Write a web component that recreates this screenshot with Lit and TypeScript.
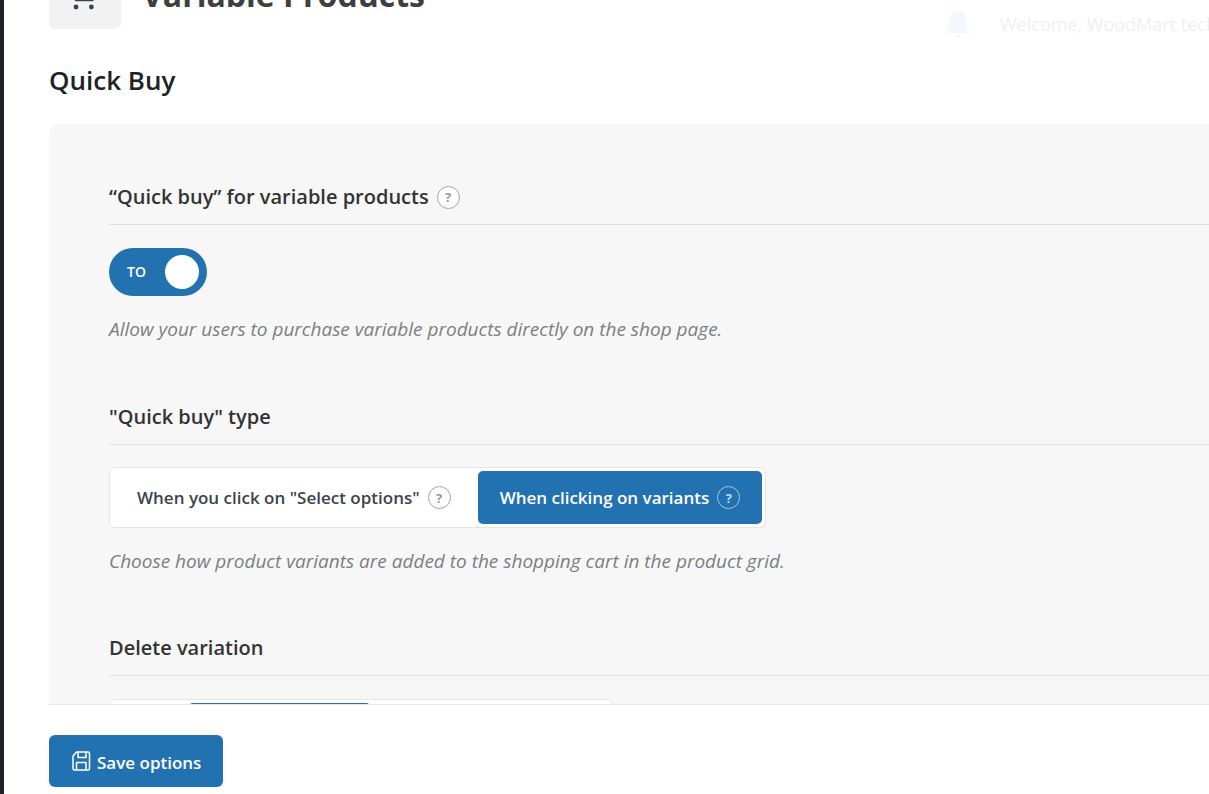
import { LitElement, html, css, nothing } from "lit";
import { customElement, property, state } from "lit/decorators.js";

interface Choice {
  label: string;
  hint?: string;
  width?: number;
}

@customElement("help-hint")
class HelpHint extends LitElement {
  @property({ type: Boolean, reflect: true }) light = false;

  static styles = css`
    :host {
      display: inline-flex;
      flex: none;
      align-items: center;
      justify-content: center;
      box-sizing: border-box;
      width: 23px;
      height: 23px;
      border: 1px solid #a3a3a3;
      border-radius: 50%;
      background: #fff;
      color: #999;
      font: 700 13px/20px "Open Sans", "Noto Sans", sans-serif;
    }
    :host([light]) {
      border-color: #a7c6e0;
      background: transparent;
      color: #c3d8ea;
    }
  `;

  render() {
    return html`?`;
  }
}

@customElement("option-group")
class OptionGroup extends LitElement {
  @property({ attribute: false }) choices: Choice[] = [];
  @property({ type: Number }) selected = 0;

  static styles = css`
    :host {
      display: block;
    }
    .group {
      display: inline-flex;
      gap: 3px;
      padding: 3px;
      border: 1px solid #e5e5e5;
      border-radius: 6px;
      background: #fff;
      vertical-align: top;
    }
    .choice {
      display: flex;
      align-items: center;
      gap: 8px;
      box-sizing: border-box;
      height: 53px;
      padding: 0 24px;
      border: 0;
      border-radius: 5px;
      background: transparent;
      color: #3c434a;
      font: 600 17px/24px "Open Sans", "Noto Sans", sans-serif;
      white-space: nowrap;
      cursor: pointer;
    }
    .choice.active {
      padding: 0 22px;
      background: #2271b1;
      color: #fff;
    }
  `;

  render() {
    return html`<div class="group" role="group">
      ${this.choices.map(
        (c, i) => html`<button
          type="button"
          class="choice ${i === this.selected ? "active" : ""}"
          style=${c.width ? `width:${c.width}px` : nothing}
          aria-pressed=${i === this.selected}
          @click=${() => (this.selected = i)}
        >
          ${c.label}
          ${c.hint
            ? html`<help-hint title=${c.hint} ?light=${i === this.selected}></help-hint>`
            : nothing}
        </button>`
      )}
    </div>`;
  }
}

@customElement("app-root")
class AppRoot extends LitElement {
  @state() private enabled = true;

  private typeChoices: Choice[] = [
    { label: 'When you click on "Select options"', hint: "Select options" },
    { label: "When clicking on variants", hint: "Variants" },
  ];

  private deleteChoices: Choice[] = [
    { label: "No", width: 72 },
    { label: "Yes", width: 183 },
    { label: "Inherit", width: 235 },
  ];

  static styles = css`
    :host {
      display: flex;
      height: 100vh;
      overflow: hidden;
      background: #fff;
      color: #333;
      font: 400 18px/28px "Open Sans", "Noto Sans", sans-serif;
    }
    .rail {
      flex: none;
      width: 4px;
      background: #1d2327;
    }
    .main {
      display: flex;
      flex: 1;
      flex-direction: column;
      min-width: 0;
      padding-left: 45px;
    }
    .scroll {
      flex: 1;
      min-height: 0;
      overflow: hidden;
    }
    .header {
      display: flex;
      align-items: center;
      gap: 21px;
      margin-top: -43px;
      white-space: nowrap;
    }
    .tile {
      display: flex;
      flex: none;
      align-items: flex-end;
      justify-content: center;
      box-sizing: border-box;
      width: 72px;
      height: 72px;
      padding: 0 4px 19px 0;
      border-radius: 6px;
      background: #f2f2f2;
    }
    .title {
      flex: 1;
      margin: 0;
      padding-top: 4px;
      color: #3f3f3f;
      font-size: 32px;
      line-height: 64px;
      font-weight: 700;
    }
    .welcome {
      display: flex;
      flex: none;
      align-items: center;
      align-self: flex-end;
      gap: 30px;
      width: 263px;
      height: 11px;
      color: #f0f0f0;
    }
    .bell {
      flex: none;
    }
    .section {
      margin: 33px 0 26px;
      color: #1d2327;
      font-size: 26px;
      line-height: 36px;
      font-weight: 600;
    }
    .panel {
      display: flex;
      flex-direction: column;
      gap: 60px;
      padding: 60px 0 60px 60px;
      border-radius: 8px 0 0 0;
      background: #f7f7f7;
    }
    .field-title {
      display: flex;
      align-items: center;
      gap: 8px;
      margin: 0 0 23px;
      padding-bottom: 14px;
      border-bottom: 1px solid #dedede;
      font-size: 20px;
      line-height: 26px;
      font-weight: 600;
    }
    .field-title.tight {
      margin-bottom: 22px;
    }
    .toggle {
      display: flex;
      align-items: center;
      justify-content: space-between;
      box-sizing: border-box;
      width: 98px;
      height: 48px;
      padding: 0 8px 0 18px;
      border-radius: 24px;
      background: #2271b1;
      color: #fff;
      font-size: 14px;
      line-height: 20px;
      font-weight: 600;
      cursor: pointer;
    }
    .toggle.off {
      background: #a7aaad;
    }
    .knob {
      appearance: none;
      width: 34px;
      height: 34px;
      margin: 0;
      border-radius: 50%;
      background: #fff;
      cursor: pointer;
    }
    .note {
      margin: 19px 0 0;
      padding-bottom: 1px;
      color: #7b7f83;
      font-size: 19px;
      font-style: italic;
    }
    .note.tight {
      padding-bottom: 0;
    }
    .footer {
      flex: none;
      padding: 30px 0 7px;
      border-top: 1px solid #e8e8e8;
    }
    .save {
      display: inline-flex;
      align-items: center;
      gap: 6px;
      box-sizing: border-box;
      height: 52px;
      padding: 4px 22px 0;
      border: 0;
      border-radius: 6px;
      background: #2271b1;
      color: #fff;
      font: 600 17px/24px "Open Sans", "Noto Sans", sans-serif;
      vertical-align: top;
      cursor: pointer;
    }
    .disk {
      margin-bottom: 4px;
    }
  `;

  render() {
    return html`
      <div class="rail"></div>
      <div class="main">
        <div class="scroll">
          <header class="header">
            <span class="tile">
              <svg width="28" height="26" viewBox="0 0 28 26" fill="none" stroke="#3c434a" stroke-width="2.4" stroke-linecap="round" stroke-linejoin="round" aria-hidden="true">
                <path d="M1 1h4l2 15h16.500M5.500 3h20l-2 8H6.500" />
                <circle cx="7" cy="23" r="2.400" fill="#3c434a" stroke="none" />
                <circle cx="22.400" cy="23" r="2.400" fill="#3c434a" stroke="none" />
              </svg>
            </span>
            <h1 class="title">Variable Products</h1>
            <div class="welcome">
              <svg class="bell" width="24" height="28" viewBox="0 0 24 28" fill="#f3f8fc" aria-hidden="true">
                <path d="M12 1C6.500 1 3 5 3 10v9L0 22v1h24v-1l-3-3v-9c0-5-3.500-9-9-9z" />
                <path d="M9 25h6a3 3 0 0 1-6 0z" />
              </svg>
              <span>Welcome, WoodMart tech</span>
            </div>
          </header>
          <h2 class="section">Quick Buy</h2>
          <div class="panel">
            <section>
              <h3 class="field-title">
                “Quick buy” for variable products
                <help-hint title="Quick buy"></help-hint>
              </h3>
              <label class="toggle ${this.enabled ? "" : "off"}">
                TO
                <input
                  class="knob"
                  type="checkbox"
                  .checked=${this.enabled}
                  @change=${() => (this.enabled = !this.enabled)}
                />
              </label>
              <p class="note">Allow your users to purchase variable products directly on the shop page.</p>
            </section>
            <section>
              <h3 class="field-title tight">"Quick buy" type</h3>
              <option-group .choices=${this.typeChoices} .selected=${1}></option-group>
              <p class="note tight">Choose how product variants are added to the shopping cart in the product grid.</p>
            </section>
            <section>
              <h3 class="field-title">Delete variation</h3>
              <option-group .choices=${this.deleteChoices} .selected=${1}></option-group>
            </section>
          </div>
        </div>
        <footer class="footer">
          <button class="save" type="button">
            <svg class="disk" width="20" height="20" viewBox="0 0 20 20" fill="none" stroke="#fff" stroke-width="1.500" stroke-linejoin="round" aria-hidden="true">
              <path d="M5.500 1H17a1.500 1.500 0 0 1 1.500 1.500v15A1.500 1.500 0 0 1 17 19H3.500A1.500 1.500 0 0 1 2 17.500V5z" />
              <path d="M7 1v5.500h8V1M5.500 19v-7.500h9.500V19" />
            </svg>
            Save options
          </button>
        </footer>
      </div>
    `;
  }
}
